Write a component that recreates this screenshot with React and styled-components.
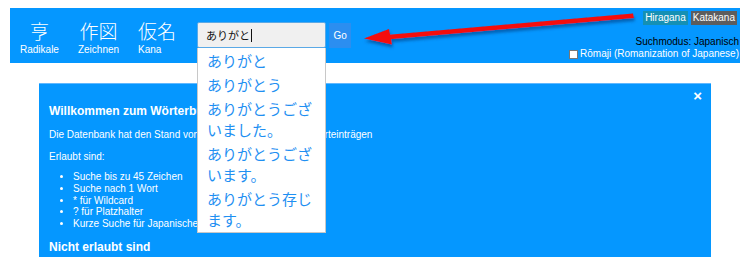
import React from "react";
import styled, { createGlobalStyle } from "styled-components";

const GlobalStyle = createGlobalStyle`
    body {
        margin: 0;
        background: #ffffff;
        font-family: "Liberation Sans", Arial, sans-serif;
    }
`;

const suggestions = [
    "ありがと",
    "ありがとう",
    "ありがとうございました。",
    "ありがとうございます。",
    "ありがとう存じます。",
];

const rules = [
    "Suche bis zu 45 Zeichen",
    "Suche nach 1 Wort",
    "* für Wildcard",
    "? für Platzhalter",
    "Kurze Suche für Japanische Wörter",
];

const App = () => {
    return (
        <Page>
            <GlobalStyle />
            <Header>
                <Nav>
                    <NavItem $align="center">
                        <span className="kanji">亨</span>
                        <span className="label">Radikale</span>
                    </NavItem>
                    <NavItem $align="center">
                        <span className="kanji">作図</span>
                        <span className="label">Zeichnen</span>
                    </NavItem>
                    <NavItem $align="flex-start">
                        <span className="kanji">仮名</span>
                        <span className="label">Kana</span>
                    </NavItem>
                </Nav>
                <Search>
                    <Input>
                        ありがと<Caret />
                    </Input>
                    <GoButton>Go</GoButton>
                    <Dropdown>
                        {suggestions.map((s) => (
                            <li key={s}>{s}</li>
                        ))}
                    </Dropdown>
                </Search>
                <Side>
                    <Toggle>
                        <KanaButton $bg="#1590b4">Hiragana</KanaButton>
                        <KanaButton $bg="#5d5d5d">Katakana</KanaButton>
                    </Toggle>
                    <Mode>Suchmodus: Japanisch</Mode>
                    <Romaji>
                        <span className="box" />
                        Rōmaji (Romanization of Japanese)
                    </Romaji>
                </Side>
            </Header>
            <Panel>
                <Close>×</Close>
                <h3>Willkommen zum Wörterbuch</h3>
                <p>Die Datenbank hat den Stand von 01.06.2020 mit 190.000 Worteinträgen</p>
                <p>Erlaubt sind:</p>
                <ul>
                    {rules.map((r) => (
                        <li key={r}>{r}</li>
                    ))}
                </ul>
                <h3>Nicht erlaubt sind</h3>
            </Panel>
            <Arrow viewBox="0 0 749 257" width="749" height="257">
                <defs>
                    <filter id="shadow" x="-10%" y="-50%" width="120%" height="200%">
                        <feDropShadow dx="1" dy="3" stdDeviation="1.5" floodColor="#003a80" floodOpacity="0.6" />
                    </filter>
                </defs>
                <g filter="url(#shadow)" fill="#f40d0d">
                    <path d="M386 35 L633 13.5 L634 18 L387 39.5 Z" />
                    <path d="M364 38.5 L389 29 L392 44.5 Z" />
                </g>
            </Arrow>
        </Page>
    );
};

const Page = styled.div`
    position: relative;
    width: 749px;
    height: 257px;
    overflow: hidden;
    padding-top: 8px;
    box-sizing: border-box;
`;

const Header = styled.header`
    position: relative;
    margin-left: 10px;
    width: 730px;
    height: 55px;
    background: #0597ff;
    display: flex;
    align-items: flex-start;
    color: #ffffff;
    box-sizing: border-box;
    padding: 12px 1px 0 10px;
`;

const Nav = styled.nav`
    display: flex;
    gap: 19px;
`;

const NavItem = styled.a`
    display: flex;
    flex-direction: column;
    align-items: ${(p) => p.$align};
    color: #ffffff;

    .kanji {
        font-family: "Noto Sans CJK JP", sans-serif;
        font-size: 19px;
        line-height: 22px;
        font-weight: 300;
    }

    .label {
        font-size: 10px;
        line-height: 12px;
        margin-top: 2px;
    }
`;

const Search = styled.div`
    position: relative;
    display: flex;
    margin-left: 21px;
    margin-top: 2px;
`;

const Input = styled.div`
    width: 129px;
    height: 26px;
    box-sizing: border-box;
    background: #f0f0f0;
    border: 1px solid #5aa9e6;
    border-radius: 2px;
    color: #111111;
    font-family: "Noto Sans CJK JP", sans-serif;
    font-size: 11px;
    line-height: 24px;
    padding-left: 8px;
    display: flex;
    align-items: center;
`;

const Caret = styled.span`
    display: inline-block;
    width: 1px;
    height: 13px;
    background: #111111;
    margin-left: 1px;
`;

const GoButton = styled.button`
    margin-left: 3px;
    margin-top: 1px;
    width: 22px;
    height: 25px;
    border: none;
    padding: 0;
    background: #2b8ef0;
    color: #ffffff;
    font-family: "Liberation Sans", Arial, sans-serif;
    font-size: 10px;
`;

const Dropdown = styled.ul`
    position: absolute;
    top: 26px;
    left: 0;
    z-index: 2;
    width: 129px;
    height: 185px;
    box-sizing: border-box;
    margin: 0;
    padding: 1px 10px 0 9px;
    list-style: none;
    background: #ffffff;
    border: 1px solid #c8c8c8;
    border-top: none;

    li {
        font-family: "Noto Sans CJK JP", sans-serif;
        font-size: 15px;
        line-height: 21px;
        color: #1f90f2;
        padding: 1px 0 2px;
    }
`;

const Side = styled.div`
    margin-left: auto;
    display: flex;
    flex-direction: column;
    align-items: flex-end;
    margin-top: -9px;
    font-size: 10px;
`;

const Toggle = styled.div`
    display: flex;
    gap: 3px;
    margin-right: 2px;
`;

const KanaButton = styled.span`
    background: ${(p) => p.$bg};
    color: #ffffff;
    padding: 0 2px;
    line-height: 14px;
    height: 14px;
`;

const Mode = styled.div`
    color: #000000;
    margin-top: 11px;
    line-height: 12px;
`;

const Romaji = styled.label`
    color: #ffffff;
    line-height: 12px;
    display: flex;
    align-items: center;
    gap: 2px;

    .box {
        width: 7px;
        height: 7px;
        background: #ffffff;
        border: 1px solid #777777;
    }
`;

const Panel = styled.section`
    position: relative;
    margin: 20px 0 0 39px;
    width: 672px;
    min-height: 180px;
    box-sizing: border-box;
    background: #0597ff;
    border-top: 1px solid #60b8ff;
    color: #ffffff;
    padding: 20px 10px 10px;
    font-size: 10px;

    h3 {
        margin: 0;
        font-size: 12px;
        line-height: 15px;
        font-weight: bold;
    }

    p {
        margin: 9px 0 8px;
        line-height: 13px;
    }

    ul {
        margin: 8px 0 10px;
        padding-left: 24px;
        line-height: 11.75px;
    }
`;

const Close = styled.span`
    position: absolute;
    top: 4px;
    right: 9px;
    font-size: 15px;
    font-weight: bold;
    line-height: 15px;
`;

const Arrow = styled.svg`
    position: absolute;
    top: 0;
    left: 0;
    pointer-events: none;
`;

export default App;
